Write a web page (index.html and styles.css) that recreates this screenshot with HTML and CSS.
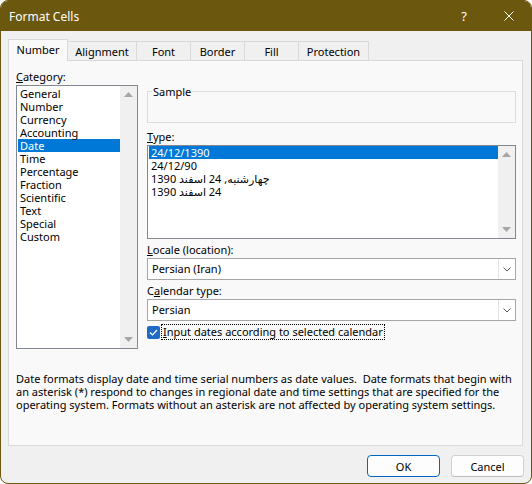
FILE: index.html
```html
<!DOCTYPE html>
<html lang="en">
<head>
    <meta charset="UTF-8">
    <title>Format Cells</title>
    <link rel="stylesheet" href="styles.css">
</head>
<body>
    <div class="window">
        <header class="titlebar">
            <span class="title">Format Cells</span>
            <span class="help">?</span>
            <svg class="close" width="10" height="10" viewBox="0 0 10 10">
                <path d="M0.5 0.5 L9.5 9.5 M9.5 0.5 L0.5 9.5" stroke="#fff" stroke-width="1" fill="none"/>
            </svg>
        </header>

        <main class="dialog">
            <nav class="tabs">
                <span class="tab tab-active tab-number">Number</span>
                <span class="tab tab-alignment">Alignment</span>
                <span class="tab tab-font">Font</span>
                <span class="tab tab-border">Border</span>
                <span class="tab tab-fill">Fill</span>
                <span class="tab tab-protection">Protection</span>
            </nav>

            <section class="panel">
                <div class="columns">
                    <div class="col-category">
                        <div class="field-label"><u>C</u>ategory:</div>
                        <div class="listbox category-list">
                            <ul class="items">
                                <li>General</li>
                                <li>Number</li>
                                <li>Currency</li>
                                <li>Accounting</li>
                                <li class="selected">Date</li>
                                <li>Time</li>
                                <li>Percentage</li>
                                <li>Fraction</li>
                                <li>Scientific</li>
                                <li>Text</li>
                                <li>Special</li>
                                <li>Custom</li>
                            </ul>
                            <div class="scrollbar">
                                <span class="scroll-btn">
                                    <svg width="9" height="5" viewBox="0 0 9 5"><path d="M0 5 L4.5 0 L9 5 Z" fill="#a6a6a6"/></svg>
                                </span>
                                <span class="scroll-btn">
                                    <svg width="9" height="5" viewBox="0 0 9 5"><path d="M0 0 L9 0 L4.5 5 Z" fill="#a6a6a6"/></svg>
                                </span>
                            </div>
                        </div>
                    </div>

                    <div class="col-options">
                        <fieldset class="sample">
                            <legend>Sample</legend>
                        </fieldset>

                        <div class="field-label label-type"><u>T</u>ype:</div>
                        <div class="listbox type-list">
                            <ul class="items">
                                <li class="selected">24/12/1390</li>
                                <li>24/12/90</li>
                                <li>&#x200F;چهارشنبه, 24 اسفند 1390</li>
                                <li>&#x200F;24 اسفند 1390</li>
                            </ul>
                            <div class="scrollbar">
                                <span class="scroll-btn">
                                    <svg width="9" height="5" viewBox="0 0 9 5"><path d="M0 5 L4.5 0 L9 5 Z" fill="#a6a6a6"/></svg>
                                </span>
                                <span class="scroll-btn">
                                    <svg width="9" height="5" viewBox="0 0 9 5"><path d="M0 0 L9 0 L4.5 5 Z" fill="#a6a6a6"/></svg>
                                </span>
                            </div>
                        </div>

                        <div class="field-label label-combo"><u>L</u>ocale (location):</div>
                        <div class="combo">
                            <span class="combo-value">Persian (Iran)</span>
                            <span class="combo-btn">
                                <svg width="8" height="5" viewBox="0 0 8 5"><path d="M0.5 0.5 L4 4 L7.5 0.5" stroke="#555" stroke-width="1" fill="none"/></svg>
                            </span>
                        </div>

                        <div class="field-label label-combo">C<u>a</u>lendar type:</div>
                        <div class="combo">
                            <span class="combo-value">Persian</span>
                            <span class="combo-btn">
                                <svg width="8" height="5" viewBox="0 0 8 5"><path d="M0.5 0.5 L4 4 L7.5 0.5" stroke="#555" stroke-width="1" fill="none"/></svg>
                            </span>
                        </div>

                        <div class="check-row">
                            <span class="checkbox">
                                <svg width="9" height="7" viewBox="0 0 9 7"><path d="M1 3.5 L3.5 6 L8 1" stroke="#fff" stroke-width="1.2" fill="none"/></svg>
                            </span>
                            <span class="check-label"><u>I</u>nput dates according to selected calendar</span>
                        </div>
                    </div>
                </div>

                <p class="description">
                    Date formats display date and time serial numbers as date values.&nbsp; Date formats that begin with<br>
                    an asterisk (*) respond to changes in regional date and time settings that are specified for the<br>
                    operating system. Formats without an asterisk are not affected by operating system settings.
                </p>
            </section>

            <footer class="buttons">
                <button class="btn btn-default">OK</button>
                <button class="btn">Cancel</button>
            </footer>
        </main>
    </div>
</body>
</html>
```

FILE: styles.css
```css
*{
    margin: 0;
    padding: 0;
    box-sizing: border-box;
}
body{
    background-color: #fff;
    font-family: "Noto Sans", "DejaVu Sans", sans-serif;
    font-size: 11px;
    line-height: 13px;
    color: #000;
}
u{
    text-decoration: underline;
    text-underline-offset: 1px;
}
li{
    list-style: none;
}
.window{
    width: 532px;
    height: 484px;
    border: 1px solid #6b570d;
    border-radius: 8px;
    overflow: hidden;
    background-color: #f0f0f0;
    display: flex;
    flex-direction: column;
}
.titlebar{
    height: 30px;
    flex: 0 0 auto;
    background-color: #6b570d;
    color: #fff;
    display: flex;
    align-items: center;
    padding-left: 8px;
    padding-right: 17px;
    font-size: 12px;
    .title{
        flex: 1 1 auto;
    }
    .help{
        font-size: 13px;
        margin-right: 37px;
    }
}
.dialog{
    flex: 1 1 auto;
    padding: 8px 7px 0 7px;
    display: flex;
    flex-direction: column;
}

/* tabs */
.tabs{
    display: flex;
    align-items: flex-end;
    height: 21px;
}
.tab{
    height: 19px;
    border: 1px solid #d9d9d9;
    border-bottom: none;
    margin-left: -1px;
    text-align: center;
    line-height: 18px;
    padding-top: 1px;
    background-color: #f0f0f0;
}
.tab-active{
    position: relative;
    z-index: 1;
    height: 22px;
    margin-bottom: -1px;
    margin-left: 0;
    background-color: #f9f9f9;
    line-height: 19px;
    padding-top: 0;
}
.tab-number{ width: 60px; }
.tab-alignment{ width: 70px; }
.tab-font{ width: 55px; }
.tab-border{ width: 55px; }
.tab-fill{ width: 55px; }
.tab-protection{ width: 71px; }

/* panel */
.panel{
    width: 515px;
    height: 386px;
    border: 1px solid #d9d9d9;
    background-color: #f9f9f9;
    padding: 9px 7px 0 7px;
}
.columns{
    display: grid;
    grid-template-columns: 122px 369px;
    column-gap: 9px;
    align-items: start;
}
.field-label{
    height: 13px;
    margin-bottom: 2px;
    white-space: nowrap;
}
.listbox{
    display: flex;
    background-color: #fff;
    border: 1px solid #828790;
    .items{
        flex: 1 1 auto;
        padding: 1px 0 0 1px;
    }
    li{
        height: 13px;
        padding-left: 2px;
        white-space: nowrap;
    }
    li.selected{
        background-color: #0078d7;
        color: #fff;
    }
}
.scrollbar{
    width: 17px;
    flex: 0 0 17px;
    background-color: #f0f0f0;
    display: flex;
    flex-direction: column;
    justify-content: space-between;
}
.scroll-btn{
    height: 17px;
    display: flex;
    align-items: center;
    justify-content: center;
}
.category-list{
    height: 264px;
}
.type-list{
    height: 94px;
    .items{
        padding-top: 0;
    }
}

/* sample group */
.sample{
    height: 38px;
    margin-top: 15px;
    border: 1px solid #dcdcdc;
    legend{
        margin-left: 4px;
        padding: 0 1px;
        line-height: 13px;
    }
}
.label-type{
    margin-top: 7px;
}
.label-combo{
    margin-top: 4px;
}
.combo{
    height: 22px;
    display: flex;
    background-color: #fff;
    border: 1px solid #a6a6a6;
    .combo-value{
        flex: 1 1 auto;
        padding-left: 4px;
        line-height: 19px;
    }
    .combo-btn{
        width: 17px;
        border-left: 1px solid #e3e3e3;
        display: flex;
        align-items: center;
        justify-content: center;
    }
}
.check-row{
    margin-top: 4px;
    display: flex;
    align-items: center;
    gap: 2px;
}
.checkbox{
    width: 13px;
    height: 13px;
    border-radius: 2px;
    background-color: #1e6ac4;
    display: flex;
    align-items: center;
    justify-content: center;
}
.check-label{
    outline: 1px dotted #000;
    outline-offset: 0;
    padding: 0 1px;
    line-height: 14px;
}
.description{
    margin-top: 23px;
    white-space: nowrap;
}

/* buttons */
.buttons{
    display: flex;
    justify-content: flex-end;
    gap: 11px;
    margin-top: 9px;
}
.btn{
    width: 73px;
    height: 22px;
    border: 1px solid #d0d0d0;
    border-bottom-color: #bcbcbc;
    border-radius: 4px;
    background-color: #fdfdfd;
    font: inherit;
    color: #000;
}
.btn-default{
    border-color: #0067c0;
}
```
